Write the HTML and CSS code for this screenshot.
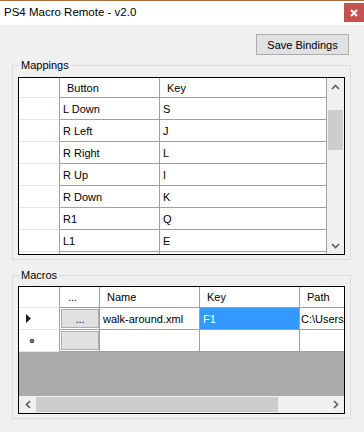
FILE: index.html
```html
<!DOCTYPE html>
<html>
<head>
  <meta charset="UTF-8">
  <title>PS4 Macro Remote - v2.0</title>
  <link rel="stylesheet" href="styles.css">
</head>
<body>
  <div class="window">
    <div class="titlebar">
      <span class="title">PS4 Macro Remote - v2.0</span>
      <span class="close">
        <svg width="8" height="8" viewBox="0 0 8 8"><path d="M1 1 L7 7 M7 1 L1 7" stroke="#fff" stroke-width="2"/></svg>
      </span>
    </div>

    <div class="content">
      <div class="toolbar">
        <button class="btn">Save Bindings</button>
      </div>

      <!-- Mapeo de botones -->
      <fieldset class="group group-map">
        <legend>Mappings</legend>
        <div class="grid grid-map">
          <div class="grid-body">
            <div class="row head">
              <div class="cell rh"></div>
              <div class="cell c-btn">Button</div>
              <div class="cell c-key">Key</div>
            </div>
            <div class="row"><div class="cell rh"></div><div class="cell c-btn">L Down</div><div class="cell c-key">S</div></div>
            <div class="row"><div class="cell rh"></div><div class="cell c-btn">R Left</div><div class="cell c-key">J</div></div>
            <div class="row"><div class="cell rh"></div><div class="cell c-btn">R Right</div><div class="cell c-key">L</div></div>
            <div class="row"><div class="cell rh"></div><div class="cell c-btn">R Up</div><div class="cell c-key">I</div></div>
            <div class="row"><div class="cell rh"></div><div class="cell c-btn">R Down</div><div class="cell c-key">K</div></div>
            <div class="row"><div class="cell rh"></div><div class="cell c-btn">R1</div><div class="cell c-key">Q</div></div>
            <div class="row"><div class="cell rh"></div><div class="cell c-btn">L1</div><div class="cell c-key">E</div></div>
            <div class="row"><div class="cell rh"></div><div class="cell c-btn"></div><div class="cell c-key"></div></div>
          </div>
          <div class="vscroll">
            <div class="sb-arrow">
              <svg width="9" height="6" viewBox="0 0 9 6"><path d="M1 5 L4.5 1.5 L8 5" stroke="#606060" stroke-width="1.7" fill="none"/></svg>
            </div>
            <div class="sb-track-v"><div class="thumb-v"></div></div>
            <div class="sb-arrow">
              <svg width="9" height="6" viewBox="0 0 9 6"><path d="M1 1 L4.5 4.5 L8 1" stroke="#606060" stroke-width="1.7" fill="none"/></svg>
            </div>
          </div>
        </div>
      </fieldset>

      <!-- Macros -->
      <fieldset class="group group-mac">
        <legend>Macros</legend>
        <div class="grid grid-mac">
          <div class="mac-body">
            <div class="row head mac-head">
              <div class="cell rh"></div>
              <div class="cell c-dots">...</div>
              <div class="cell c-name">Name</div>
              <div class="cell c-mkey">Key</div>
              <div class="cell c-path">Path</div>
            </div>
            <div class="row">
              <div class="cell rh">
                <svg class="mark" width="5" height="9" viewBox="0 0 5 9"><path d="M0 0 L5 4.5 L0 9 Z" fill="#1e1e1e"/></svg>
              </div>
              <div class="cell c-dots"><span class="cell-btn">...</span></div>
              <div class="cell c-name">walk-around.xml</div>
              <div class="cell c-mkey selected">F1</div>
              <div class="cell c-path">C:\Users</div>
            </div>
            <div class="row">
              <div class="cell rh">
                <svg class="star" width="6" height="6" viewBox="0 0 6 6"><circle cx="3" cy="3" r="2.3" fill="#4a4a4a"/><circle cx="3" cy="3" r="1" fill="#8a8a8a"/></svg>
              </div>
              <div class="cell c-dots"><span class="cell-btn"></span></div>
              <div class="cell c-name"></div>
              <div class="cell c-mkey"></div>
              <div class="cell c-path"></div>
            </div>
          </div>
          <div class="hscroll">
            <div class="sb-arrow-h">
              <svg width="6" height="9" viewBox="0 0 6 9"><path d="M5 1 L1.5 4.5 L5 8" stroke="#606060" stroke-width="1.7" fill="none"/></svg>
            </div>
            <div class="sb-track-h"><div class="thumb-h"></div></div>
            <div class="sb-arrow-h">
              <svg width="6" height="9" viewBox="0 0 6 9"><path d="M1 1 L4.5 4.5 L1 8" stroke="#606060" stroke-width="1.7" fill="none"/></svg>
            </div>
          </div>
        </div>
      </fieldset>
    </div>
  </div>
</body>
</html>
```

FILE: styles.css
```css
/* Estilos generales */
* {
  box-sizing: border-box;
}

body {
  margin: 0;
  padding: 0;
  background-color: #f0f0f0;
  font-family: 'Liberation Sans', Arial, sans-serif;
  font-size: 11px;
  color: #000;
}

.window {
  width: 364px;
  height: 432px;
  background-color: #f0f0f0;
  overflow: hidden;
}

/* Barra de titulo */
.titlebar {
  height: 25px;
  border-top: 1px solid #a8703c;
  background-color: #fff;
  display: flex;
  justify-content: space-between;
  align-items: flex-start;
}

.title {
  font-size: 11.5px;
  line-height: 23px;
  padding-left: 4px;
}

.close {
  width: 20px;
  height: 19px;
  margin-top: 2px;
  background-color: #c75050;
  display: flex;
  align-items: center;
  justify-content: center;
}

.content {
  padding: 9px 13px 0 12px;
}

.toolbar {
  display: flex;
  justify-content: flex-end;
  padding-right: 2px;
}

.btn {
  width: 93px;
  height: 21px;
  padding: 0;
  font-family: inherit;
  font-size: 11px;
  color: #000;
  background-color: #e1e1e1;
  border: 1px solid #adadad;
}

/* Grupos */
.group {
  margin: 0;
  min-width: 0;
  width: 339px;
  border: 1px solid #dcdcdc;
  padding: 4px 5px 4px 5px;
}

.group legend {
  padding: 0 2px;
  margin-left: 1px;
  line-height: 16px;
  font-size: 11px;
}

.group-map {
  margin-top: 2px;
}

.group-mac {
  margin-top: 7px;
  padding-top: 3px;
}

/* Tablas */
.grid {
  width: 327px;
  border: 1px solid #000;
  background-color: #fff;
  display: flex;
  overflow: hidden;
}

.grid-map {
  height: 178px;
}

.grid-body {
  width: 308px;
  overflow: hidden;
}

.row {
  display: flex;
  height: 22px;
  background-color: #fff;
}

.row.head {
  height: 20px;
}

.row.mac-head {
  height: 21px;
}

.cell {
  flex: none;
  height: 100%;
  display: flex;
  align-items: center;
  padding-left: 3px;
  border-right: 1px solid #a0a0a0;
  border-bottom: 1px solid #a0a0a0;
  white-space: nowrap;
  overflow: hidden;
}

.head .cell {
  padding-left: 7px;
}

.cell.rh {
  width: 41px;
  border-bottom-color: #e3e3e3;
  padding-left: 0;
}

.c-btn {
  width: 100px;
}

.c-key {
  width: 167px;
}

/* Barra vertical */
.vscroll {
  width: 17px;
  background-color: #f0f0f0;
  display: flex;
  flex-direction: column;
}

.sb-arrow {
  height: 17px;
  display: flex;
  align-items: center;
  justify-content: center;
}

.sb-track-v {
  flex-grow: 1;
  padding: 15px 1px 0 1px;
}

.thumb-v {
  height: 40px;
  background-color: #cdcdcd;
}

/* Tabla de macros */
.grid-mac {
  height: 128px;
  flex-direction: column;
}

.mac-body {
  flex-grow: 1;
  background-color: #ababab;
  overflow: hidden;
}

.c-dots {
  width: 40px;
  padding-left: 1px;
}

.head .c-dots {
  padding-left: 8px;
}

.c-name {
  width: 100px;
}

.c-mkey {
  width: 100px;
}

.c-path {
  width: 44px;
  border-right: none;
  padding-left: 1px;
}

.head .c-path {
  padding-left: 7px;
}

.selected {
  background-color: #3399ff;
  color: #fff;
}

.mark {
  margin-left: 7px;
}

.star {
  margin-left: 10px;
}

.cell-btn {
  width: 38px;
  height: 19px;
  background-color: #e1e1e1;
  border: 1px solid #adadad;
  display: flex;
  align-items: center;
  justify-content: center;
}

/* Barra horizontal */
.hscroll {
  height: 17px;
  flex: none;
  background-color: #f0f0f0;
  display: flex;
}

.sb-arrow-h {
  width: 17px;
  display: flex;
  align-items: center;
  justify-content: center;
}

.sb-track-h {
  flex-grow: 1;
  padding: 1px 0;
}

.thumb-h {
  width: 242px;
  height: 100%;
  background-color: #cdcdcd;
}
```
